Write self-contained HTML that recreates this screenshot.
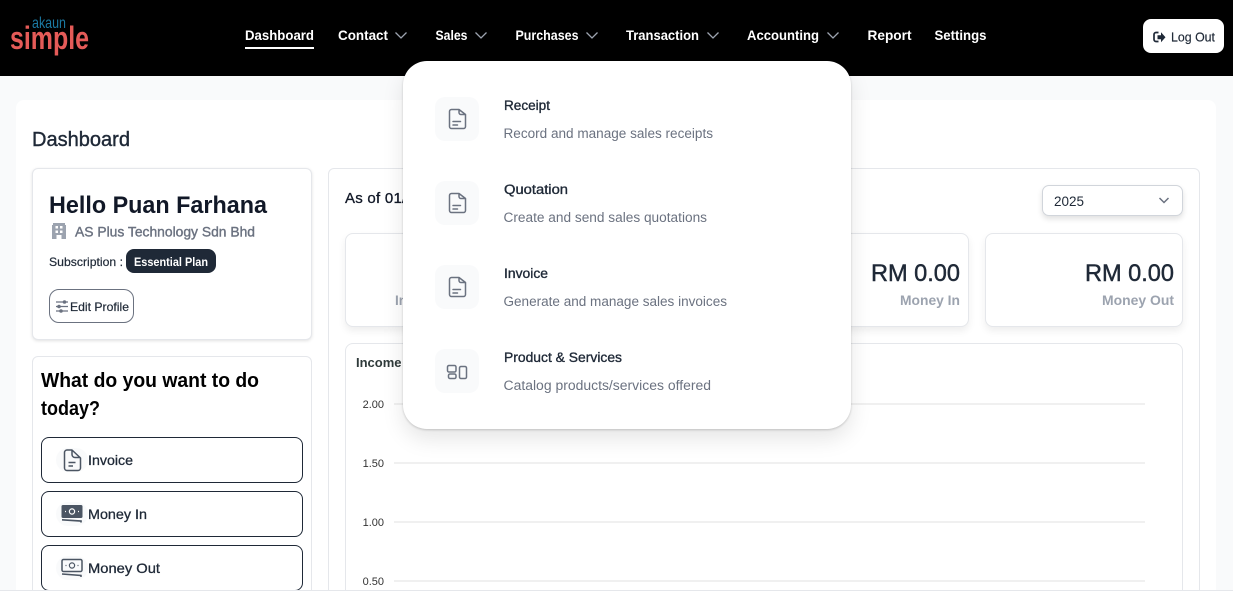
<!DOCTYPE html>
<html lang="en">
<head>
<meta charset="utf-8">
<title>Dashboard</title>
<style>
html,body{margin:0;padding:0;width:1233px;height:601px;overflow:hidden;background:#f9fafb;font-family:"Liberation Sans",sans-serif}
#root{position:relative;width:1233px;height:601px;overflow:hidden;background:#f9fafb}
.b{position:absolute;box-sizing:border-box}
svg.l{position:absolute;left:0;top:0;width:1233px;height:601px}
text{font-family:"Liberation Sans",sans-serif}
.nav{font-size:14px;font-weight:700;fill:#fff}
.m{stroke:currentColor;stroke-width:.3px}
.card{background:#fff;border:1px solid #e5e7eb;border-radius:6px;box-shadow:0 1px 3px rgba(0,0,0,.12)}
.stat{background:#fff;border:1px solid #e5e7eb;border-radius:8px;box-shadow:0 4px 8px rgba(0,0,0,.07)}
.btn{left:41px;width:262px;height:46px;border:1px solid #1f2937;border-radius:8px;background:#fff}
.ic{left:56px;width:32px;height:24px;border-radius:12px;background:#f9fafb}
.ibox{left:435px;width:44px;height:44px;border-radius:10px;background:#f9fafb}
.t{font-size:13.5px;fill:#1f2937;stroke:#1f2937;stroke-width:.35px}
.d{font-size:13.5px;fill:#6b7280}
.ax{font-size:11px;fill:#333;text-anchor:end}
.chev{fill:none;stroke:#9ca3af;stroke-width:1.3}
.ico{fill:none;stroke:#6b7280;stroke-width:1.5;stroke-linejoin:round;stroke-linecap:round}
</style>
</head>
<body>
<div id="root">
<div class="b" style="left:0;top:0;width:1233px;height:76px;background:#000"></div>
<div class="b" style="left:16px;top:100px;width:1200px;height:510px;background:#fff;border-radius:8px"></div>
<div class="b card" style="left:32px;top:168px;width:280px;height:172px"></div>
<div class="b" style="left:49px;top:289px;width:85px;height:34px;border:1px solid #6b7280;border-radius:10px"></div>
<div class="b" style="left:126px;top:249px;width:90px;height:24px;background:#1f2937;border-radius:8px"></div>
<div class="b card" style="left:32px;top:356px;width:280px;height:260px;box-shadow:none"></div>
<div class="b btn" style="top:437px"></div>
<div class="b btn" style="top:491px"></div>
<div class="b btn" style="top:545px"></div>
<div class="b ic" style="top:448px"></div>
<div class="b ic" style="top:502px"></div>
<div class="b ic" style="top:556px"></div>
<div class="b card" style="left:328px;top:168px;width:872px;height:450px;box-shadow:none"></div>
<div class="b" style="left:1042px;top:185px;width:141px;height:31px;background:#fff;border:1px solid #d1d5db;border-radius:7px;box-shadow:0 3px 6px rgba(0,0,0,.12)"></div>
<div class="b stat" style="left:345px;top:233px;width:198px;height:94px"></div>
<div class="b stat" style="left:772px;top:233px;width:197px;height:94px"></div>
<div class="b stat" style="left:985px;top:233px;width:198px;height:94px"></div>
<div class="b" style="left:345px;top:343px;width:838px;height:280px;background:#fff;border:1px solid #e5e7eb;border-radius:8px"></div>
<div class="b" style="left:1143px;top:19px;width:81px;height:34px;background:#fff;border-radius:8px"></div>

<svg class="l" viewBox="0 0 1233 601">
  <!-- logo -->
  <text x="32" y="28" font-size="16" fill="#1b7aa3" textLength="34" lengthAdjust="spacingAndGlyphs">akaun</text>
  <text x="10" y="49" font-size="32" font-weight="700" fill="#e55b58" textLength="79" lengthAdjust="spacingAndGlyphs">simple</text>

  <!-- nav -->
  <text class="nav" x="245" y="40" textLength="69" lengthAdjust="spacingAndGlyphs">Dashboard</text>
  <rect x="245" y="47" width="69" height="2" fill="#fff"/>
  <text class="nav" x="338" y="40" textLength="50" lengthAdjust="spacingAndGlyphs">Contact</text>
  <path class="chev" d="M395.500 32.500l5.500 5.500 5.500-5.500"/>
  <text class="nav" x="435.500" y="40" textLength="32" lengthAdjust="spacingAndGlyphs">Sales</text>
  <path class="chev" d="M475.500 32.500l5.500 5.500 5.500-5.500"/>
  <text class="nav" x="515.500" y="40" textLength="63" lengthAdjust="spacingAndGlyphs">Purchases</text>
  <path class="chev" d="M586.500 32.500l5.500 5.500 5.500-5.500"/>
  <text class="nav" x="626" y="40" textLength="73" lengthAdjust="spacingAndGlyphs">Transaction</text>
  <path class="chev" d="M707.500 32.500l5.500 5.500 5.500-5.500"/>
  <text class="nav" x="747" y="40" textLength="72" lengthAdjust="spacingAndGlyphs">Accounting</text>
  <path class="chev" d="M827.500 32.500l5.500 5.500 5.500-5.500"/>
  <text class="nav" x="867.500" y="40" textLength="44" lengthAdjust="spacingAndGlyphs">Report</text>
  <text class="nav" x="934.500" y="40" textLength="52" lengthAdjust="spacingAndGlyphs">Settings</text>

  <!-- logout -->
  <path d="M1158.500 32.500h-2.500a2 2 0 0 0-2 2v5a2 2 0 0 0 2 2h2.500" fill="none" stroke="#1f2937" stroke-width="1.700"/>
  <path d="M1157.500 35.200h3.500v-3l4.500 5-4.500 5v-3h-3.500z" fill="#1f2937"/>
  <text x="1171" y="41.500" font-size="13" fill="#1f2937" class="m" style="color:#1f2937;stroke-width:.15px" textLength="44" lengthAdjust="spacingAndGlyphs">Log Out</text>

  <!-- left -->
  <text x="32" y="146" font-size="20" fill="#1f2937" class="m" style="color:#1f2937;stroke-width:.4px" textLength="98" lengthAdjust="spacingAndGlyphs">Dashboard</text>
  <text x="49" y="213" font-size="24" font-weight="700" fill="#111827" textLength="218" lengthAdjust="spacingAndGlyphs">Hello Puan Farhana</text>
  <path fill-rule="evenodd" fill="#9ca3af" d="M53 223h12v2h1v14h-4.500v-4h-5v4H52v-14h1zM55.500 226v2.500h2.500V226zM60 226v2.500h2.500V226zM55.500 230.500V233h2.500v-2.500zM60 230.500V233h2.500v-2.500z"/>
  <text x="75" y="236.500" font-size="14" fill="#6b7280" class="m" style="color:#6b7280;stroke-width:.4px" textLength="180" lengthAdjust="spacingAndGlyphs">AS Plus Technology Sdn Bhd</text>
  <text x="49" y="266" font-size="12" fill="#1f2937" class="m" style="color:#1f2937;stroke-width:.2px" textLength="74" lengthAdjust="spacingAndGlyphs">Subscription :</text>
  <text x="134" y="266" font-size="12" font-weight="700" fill="#fff" textLength="74" lengthAdjust="spacingAndGlyphs">Essential Plan</text>
  <g stroke="#6b7280" stroke-width="1.200" fill="#6b7280">
    <path d="M56 302h12M56 306.500h12M56 311h12"/>
    <circle cx="64.500" cy="302" r="1.200"/><circle cx="59" cy="306.500" r="1.200"/><circle cx="61" cy="311" r="1.200"/>
  </g>
  <text x="70" y="311" font-size="12" fill="#1f2937" class="m" style="color:#1f2937;stroke-width:.2px" textLength="59" lengthAdjust="spacingAndGlyphs">Edit Profile</text>

  <text x="41" y="387" font-size="20" font-weight="700" fill="#000" textLength="218" lengthAdjust="spacingAndGlyphs">What do you want to do</text>
  <text x="41" y="415" font-size="20" font-weight="700" fill="#000" textLength="59" lengthAdjust="spacingAndGlyphs">today?</text>

  <path d="M72 450h-5a2.500 2.500 0 0 0-2.500 2.500v15.500a2.500 2.500 0 0 0 2.500 2.500h11a2.500 2.500 0 0 0 2.500-2.500v-10zM72 450v4.500a3 3 0 0 0 3 3h5.500M68.500 462.500h7M68.500 466h4.500" fill="none" stroke="#4b5563" stroke-width="1.500" stroke-linejoin="round"/>
  <text x="88" y="465" font-size="14" fill="#1f2937" class="m" style="color:#1f2937" textLength="45" lengthAdjust="spacingAndGlyphs">Invoice</text>

  <rect x="61.500" y="505" width="21" height="13" rx="1.500" fill="#4b5563"/>
  <circle cx="72" cy="511.500" r="2.600" fill="none" stroke="#fff" stroke-width="1.200"/>
  <path d="M65 511.500h1M78 511.500h1" stroke="#fff" stroke-width="1.200"/>
  <path d="M62 519.800l19 1.200v1.500" fill="none" stroke="#4b5563" stroke-width="1.700"/>
  <text x="88" y="519" font-size="14" fill="#1f2937" class="m" style="color:#1f2937" textLength="59" lengthAdjust="spacingAndGlyphs">Money In</text>

  <rect x="62" y="559.500" width="20" height="12" rx="1.500" fill="none" stroke="#4b5563" stroke-width="1.500"/>
  <circle cx="72" cy="565.500" r="2.600" fill="none" stroke="#4b5563" stroke-width="1.200"/>
  <path d="M65.500 565.500h1M77.500 565.500h1" stroke="#4b5563" stroke-width="1.200"/>
  <path d="M62 574l19 1.500v1.500" fill="none" stroke="#4b5563" stroke-width="1.500"/>
  <text x="88" y="573" font-size="14" fill="#1f2937" class="m" style="color:#1f2937" textLength="72" lengthAdjust="spacingAndGlyphs">Money Out</text>

  <!-- right -->
  <text x="345" y="203" font-size="15" fill="#111827" class="m" style="color:#111827" letter-spacing=".25">As of 01/01/2025</text>
  <text x="1054" y="206" font-size="14" fill="#1f2937" textLength="30" lengthAdjust="spacingAndGlyphs">2025</text>
  <path d="M1159.500 198l4.500 4.500 4.500-4.500" fill="none" stroke="#6b7280" stroke-width="1.500"/>

  <text x="395" y="305" font-size="13.500" font-weight="700" fill="#9ca3af">Income</text>
  <text x="871" y="281" font-size="24" fill="#1f2937" class="m" style="color:#1f2937;stroke-width:.45px" textLength="89" lengthAdjust="spacingAndGlyphs">RM 0.00</text>
  <text x="900" y="305" font-size="13.500" font-weight="700" fill="#9ca3af" textLength="60" lengthAdjust="spacingAndGlyphs">Money In</text>
  <text x="1085" y="281" font-size="24" fill="#1f2937" class="m" style="color:#1f2937;stroke-width:.45px" textLength="89" lengthAdjust="spacingAndGlyphs">RM 0.00</text>
  <text x="1102" y="305" font-size="13.500" font-weight="700" fill="#9ca3af" textLength="72" lengthAdjust="spacingAndGlyphs">Money Out</text>

  <text x="356" y="367" font-size="13" font-weight="700" fill="#2f3a3a">Income vs Expense</text>
  <g fill="#f0f0f0">
    <rect x="394" y="403" width="751" height="2"/>
    <rect x="394" y="462" width="751" height="2"/>
    <rect x="394" y="521" width="751" height="2"/>
    <rect x="394" y="580" width="751" height="2"/>
  </g>
  <text class="ax" x="384" y="408">2.00</text>
  <text class="ax" x="384" y="467">1.50</text>
  <text class="ax" x="384" y="526">1.00</text>
  <text class="ax" x="384" y="585">0.50</text>
</svg>

<!-- bottom strip -->
<div class="b" style="left:0;top:590px;width:1233px;height:11px;background:#fff;border-top:1px solid #e5e7eb"></div>

<!-- dropdown -->
<div class="b" style="left:403px;top:61px;width:448px;height:368px;background:#fff;border-radius:24px;box-shadow:0 1px 2px rgba(0,0,0,.18),0 10px 22px rgba(0,0,0,.10)"></div>
<div class="b ibox" style="top:97px"></div>
<div class="b ibox" style="top:181px"></div>
<div class="b ibox" style="top:265px"></div>
<div class="b ibox" style="top:349px"></div>
<svg class="l" viewBox="0 0 1233 601">
  <path class="ico" d="M459 109.500h-7.500a2 2 0 0 0-2 2v15a2 2 0 0 0 2 2h12a2 2 0 0 0 2-2v-12zM459 109.500v3a2 2 0 0 0 2 2h4.500M453 121.500h7.500M453 125h4.500"/>
  <path class="ico" d="M459 193.500h-7.500a2 2 0 0 0-2 2v15a2 2 0 0 0 2 2h12a2 2 0 0 0 2-2v-12zM459 193.500v3a2 2 0 0 0 2 2h4.500M453 205.500h7.500M453 209h4.500"/>
  <path class="ico" d="M459 277.500h-7.500a2 2 0 0 0-2 2v15a2 2 0 0 0 2 2h12a2 2 0 0 0 2-2v-12zM459 277.500v3a2 2 0 0 0 2 2h4.500M453 289.500h7.500M453 293h4.500"/>
  <rect class="ico" x="447.500" y="365.500" width="8.500" height="6.500" rx="1.500"/>
  <rect class="ico" x="448.500" y="374" width="7.500" height="4.500" rx="1.500"/>
  <rect class="ico" x="459.500" y="366.500" width="7" height="12" rx="1.500"/>

  <text class="t" x="504" y="110" textLength="46" lengthAdjust="spacingAndGlyphs">Receipt</text>
  <text class="d" x="503.500" y="138" textLength="209.500" lengthAdjust="spacingAndGlyphs">Record and manage sales receipts</text>
  <text class="t" x="504" y="194" textLength="64" lengthAdjust="spacingAndGlyphs">Quotation</text>
  <text class="d" x="503.500" y="222" textLength="203.500" lengthAdjust="spacingAndGlyphs">Create and send sales quotations</text>
  <text class="t" x="504" y="278" textLength="44" lengthAdjust="spacingAndGlyphs">Invoice</text>
  <text class="d" x="503.500" y="306" textLength="223.500" lengthAdjust="spacingAndGlyphs">Generate and manage sales invoices</text>
  <text class="t" x="504" y="362" textLength="118" lengthAdjust="spacingAndGlyphs">Product &amp; Services</text>
  <text class="d" x="503.500" y="390" textLength="207.500" lengthAdjust="spacingAndGlyphs">Catalog products/services offered</text>
</svg>
</div>
</body>
</html>
